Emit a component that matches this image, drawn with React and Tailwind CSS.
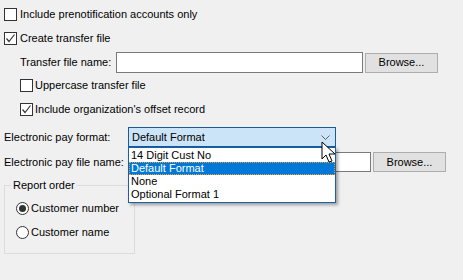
import React from 'react';

const font = "font-['Liberation_Sans',Arial,sans-serif]";

function CheckBox({ checked }) {
  return (
    <span className="w-[13px] h-[13px] shrink-0 border border-[#333333] bg-white flex items-center justify-center">
      {checked && (
        <svg width="11" height="11" viewBox="0 0 11 11">
          <path d="M1.5 5.5 L4 8.5 L9.5 1.5" fill="none" stroke="#333" strokeWidth="1.2" />
        </svg>
      )}
    </span>
  );
}

function Radio({ checked }) {
  return (
    <span className="w-[13px] h-[13px] shrink-0 rounded-full border border-[#333333] bg-white flex items-center justify-center">
      {checked && <span className="w-[7px] h-[7px] rounded-full bg-[#333333]" />}
    </span>
  );
}

function Button({ children }) {
  return (
    <div className="w-[73px] h-[20px] border border-[#adadad] bg-[#e1e1e1] flex items-center justify-center">
      {children}
    </div>
  );
}

const formats = ['14 Digit Cust No', 'Default Format', 'None', 'Optional Format 1'];

export default function App() {
  return (
    <div className={`${font} text-[11px] leading-[13px] text-black bg-[#f0f0f0] w-[463px] h-[280px] overflow-hidden relative`}>
      <div className="flex flex-col pl-[4px]">
        <div className="flex items-center gap-[3px] mt-[8px] h-[13px]">
          <CheckBox />
          <span>Include prenotification accounts only</span>
        </div>
        <div className="flex items-center gap-[3px] mt-[11px] h-[13px]">
          <CheckBox checked />
          <span>Create transfer file</span>
        </div>
        <div className="flex items-center mt-[7px] pl-[16px] h-[21px]">
          <span className="w-[96px]">Transfer file name:</span>
          <div className="w-[247px] h-[21px] border border-[#7a7a7a] bg-white" />
          <div className="ml-[2px]">
            <Button>Browse...</Button>
          </div>
        </div>
        <div className="flex items-center gap-[2px] mt-[6px] pl-[16px] h-[13px]">
          <CheckBox />
          <span>Uppercase transfer file</span>
        </div>
        <div className="flex items-center gap-[2px] mt-[11px] pl-[16px] h-[13px]">
          <CheckBox checked />
          <span>Include organization's offset record</span>
        </div>
        <div className="flex items-center mt-[11px] h-[20px]">
          <span className="w-[124px]">Electronic pay format:</span>
          <div className="relative w-[208px] h-[20px]">
            <div className="w-full h-full border border-[#1a5a96] bg-[#cce4f7] flex items-center pl-[3px]">
              <span className="flex-1">Default Format</span>
              <svg width="9" height="5" viewBox="0 0 9 5" className="mr-[5px]">
                <path d="M0.5 0.5 L4.5 4.5 L8.5 0.5" fill="none" stroke="#606060" strokeWidth="1" />
              </svg>
            </div>
            <div className="absolute left-0 top-[20px] w-[208px] border border-[#1a5fa8] bg-white py-[1px] shadow-[2px_2px_3px_rgba(0,0,0,0.35)] z-10">
              {formats.map((f) => (
                <div
                  key={f}
                  className={
                    f === 'Default Format'
                      ? 'h-[13px] flex items-center pl-[1px] bg-[#0078d7] text-white border border-dotted border-[#f0a030]'
                      : 'h-[13px] flex items-center pl-[2px]'
                  }
                >
                  {f}
                </div>
              ))}
            </div>
          </div>
        </div>
        <div className="flex items-center mt-[5px] h-[20px]">
          <span className="w-[124px]">Electronic pay file name:</span>
          <div className="w-[243px] h-[20px] border border-[#7a7a7a] bg-white" />
          <div className="ml-[2px]">
            <Button>Browse...</Button>
          </div>
        </div>
        <fieldset className="mt-[7px] w-[131px] h-[75px] border border-[#dcdcdc] rounded-none px-[11px]">
          <legend className="px-[2px] -ml-[5px]">Report order</legend>
          <div className="flex items-center gap-[2px] mt-[10px] h-[13px]">
            <Radio checked />
            <span>Customer number</span>
          </div>
          <div className="flex items-center gap-[2px] mt-[11px] h-[13px]">
            <Radio />
            <span>Customer name</span>
          </div>
        </fieldset>
      </div>
      <svg className="absolute left-[321px] top-[141px] z-20" width="16" height="24" viewBox="0 0 16 24">
        <path
          d="M1 1 L1 18 L5 14 L8 21 L11 20 L8 13 L14 13 Z"
          fill="white"
          stroke="black"
          strokeWidth="1"
          strokeLinejoin="miter"
        />
      </svg>
    </div>
  );
}
